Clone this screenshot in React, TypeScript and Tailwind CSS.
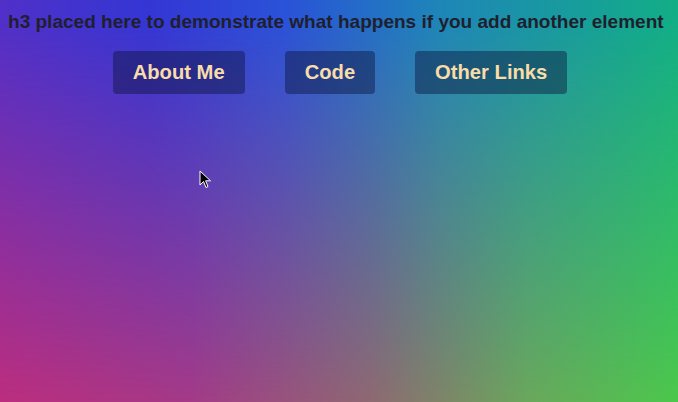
const links = ["About Me", "Code", "Other Links"];

const Cursor = () => (
  <svg width="14" height="20" viewBox="0 0 14 20" className="absolute left-[199px] top-[170px]">
    <path d="M1 1 L1 15 L4.5 11.5 L7 17.5 L9 16.6 L6.6 10.8 L11.5 10.8 Z" fill="#000" stroke="#fff" strokeWidth="1" />
  </svg>
);

export default function App() {
  return (
    <div className="relative h-[402px] w-full overflow-hidden bg-[linear-gradient(to_right,#bc2e7e_0%,#a43a88_28%,#8e6a72_55%,#6aa85c_78%,#4cc84c_100%)] font-['Liberation_Sans',Arial,sans-serif]">
      {/* top half of the mesh, fading into the bottom row */}
      <div className="absolute inset-0 bg-[linear-gradient(to_right,#5030c8_0%,#3436d4_22%,#2a52d8_42%,#1e86b8_65%,#12ae86_100%)] [mask-image:linear-gradient(to_bottom,black_5%,transparent)]" />
      <div className="relative flex flex-col items-center">
        <h3 className="mt-[11px] self-start pl-[8px] text-[19.05px] font-bold leading-[22px] text-[#1f1f2e]">
          h3 placed here to demonstrate what happens if you add another element
        </h3>
        <nav className="mt-[18px] ml-[2px] flex gap-[40px]">
          {links.map((l) => (
            <a
              key={l}
              href="#"
              className="rounded-[4px] bg-[rgba(10,20,60,0.45)] px-[20px] py-[10px] text-[20.2px] font-bold leading-[23px] text-[#f8dcaa]"
            >
              {l}
            </a>
          ))}
        </nav>
      </div>
      <Cursor />
    </div>
  );
}
